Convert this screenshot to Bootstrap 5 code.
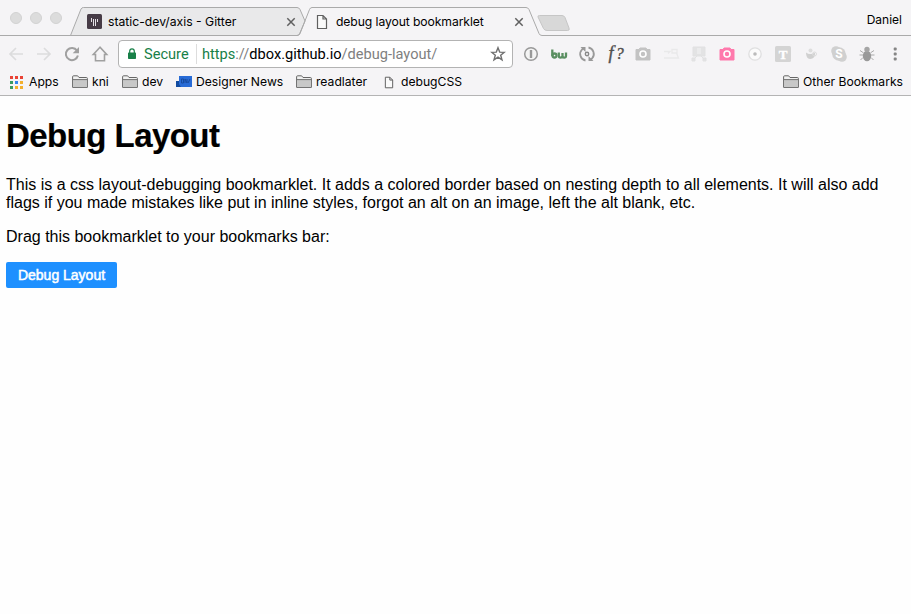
<!DOCTYPE html>
<html lang="en">
<head>
<meta charset="utf-8">
<title>debug layout bookmarklet</title>
<link href="https://cdn.jsdelivr.net/npm/bootstrap@5.3.0/dist/css/bootstrap.min.css" rel="stylesheet">
<style>
body{background:#fefefe;color:#000;height:614px;overflow:hidden;font-family:"Liberation Sans",Arial,sans-serif}
.chrome-ui{background:#f5f4f6;height:96px;border-bottom:1px solid #b4b4b4;font:13px/16px Inter,Roboto,sans-serif;white-space:nowrap}
.tabstrip{height:36px}
.tab-shapes{z-index:0}
.strip-item{z-index:1}
.lights{width:87px;padding:0 0 0 10px;gap:8px}
.light{width:12px;height:12px;border-radius:50%;background:#dcdcdc;border:1px solid #d2d2d2}
.tab-one{width:229px;padding-top:7px}
.tab-two{width:260px;padding-top:7px}
.tab-label{font:12.2px/16px Inter,Roboto,sans-serif}
.t1{width:180px;padding-left:6px}
.t2{width:178px;padding-left:8px;letter-spacing:-.1px}
.person{padding:3px 9px 0 0;font-size:12px}
.toolbar{height:36px;padding-left:2px}
.tool{width:28px;height:28px;flex:none}
.omnibox{width:395px;height:28px;margin:0 4px;background:#fff;border:1px solid #b3b3b3;border-radius:4px;font:14.6px/20px Roboto,sans-serif}
.secure{color:#188048;width:45px;margin-left:7px}
.url-text{color:#808080;width:288px}
.vbar{width:1px;height:20px;background:#ddd;margin:0 5px 0 7px}
.bookmarks{height:20px;font-size:12.15px;padding-left:10px}
.bm{flex:none;gap:4px}
.bm:nth-child(1){width:62px;gap:6px}
.bm:nth-child(2){width:50px}
.bm:nth-child(3){width:54px}
.bm:nth-child(4){width:120px}
.bm:nth-child(5){width:85px}
.page-body{padding:21px 6px 0;font-size:16px;line-height:18px}
.page-title{font-size:33px;letter-spacing:-.55px;line-height:38px;font-weight:700;margin-bottom:21px;-webkit-text-stroke:.2px #000}
.page-text{margin-bottom:16px}
.mark-btn{background:#1e90ff;color:#fff;border:0;border-radius:2px;width:111px;height:26px;font-size:14px;line-height:26px;-webkit-text-stroke:.5px #fff}
</style>
<script src="https://cdn.jsdelivr.net/npm/bootstrap@5.3.0/dist/js/bootstrap.bundle.min.js"></script>
</head>
<body>
<svg width="0" height="0" class="position-absolute">
<symbol id="folder" viewBox="0 0 16 14"><path d="M.6 12.4V1.8Q.6.8 1.6.8H5.6L7 2.5H14.4Q15.4 2.5 15.4 3.5V12.4Z" fill="#f0f0f0" stroke="#666"/><path d="M1 5H15V12H1Z" fill="#c8c8c8"/><path d="M1 4.6H15" stroke="#707070"/></symbol>
<symbol id="sheet" viewBox="0 0 12 16"><path d="M1.5 1.5H7L10.5 5V14.5H1.5ZM7 1.5V5H10.5" fill="#fafafa" stroke="#606060" stroke-width="1.2"/></symbol>
<symbol id="close" viewBox="0 0 10 10"><path d="M1.3 1.3L8.7 8.7M8.7 1.3L1.3 8.7" stroke="#606060" stroke-width="1.5"/></symbol>
<symbol id="camera" viewBox="0 0 28 28"><path d="M7 9.5H10L11 8H17L18 9.5H21V20H7Z" fill="currentColor" stroke="currentColor" stroke-linejoin="round"/><circle cx="14" cy="14" r="3" fill="none" stroke="#fff" stroke-width="1.6"/></symbol>
</svg>
<header class="chrome-ui">
<div class="tabstrip position-relative d-flex">
<svg class="tab-shapes position-absolute top-0 start-0" width="911" height="36"><path d="M70.5 35.5L81 9Q81.800 7.500 83.500 7.500H297Q299 7.500 300 9.500L305 21L299.500 34Q299 35.500 297 35.500Z" fill="#e9e9ea" stroke="#aaa"/><path d="M0 35.500H297Q299 35.500 300 33.500L309.500 9.500Q310.300 7.500 312 7.500H526Q528 7.500 529 9.500L539 33.500Q539.800 35.500 542 35.500H911" fill="none" stroke="#aaa"/><path d="M539.500 15.500H562Q564 15.500 565 17.500L569 28Q570 30.500 567.500 30.500H547Q544.500 30.500 543.500 28.500L538 17Q537.500 15.500 539.500 15.500Z" fill="#d8d8d8" stroke="#c6c6c6"/></svg>
<div class="lights strip-item d-flex align-items-center"><span class="light"></span><span class="light"></span><span class="light"></span></div>
<div class="tab-one strip-item d-flex align-items-center">
<svg width="15" height="15" viewBox="0 0 15 15"><rect width="15" height="15" rx="1.500" fill="#463b45"/><path d="M4.500 4V8M6.500 5V12M8.500 5V12M10.500 5V8" stroke="#e6e2e6"/></svg>
<span class="tab-label t1">static-dev/axis - Gitter</span>
<svg class="ms-1" width="10" height="10"><use href="#close"/></svg>
</div>
<div class="tab-two strip-item d-flex align-items-center">
<svg width="12" height="16"><use href="#sheet"/></svg>
<span class="tab-label t2">debug layout bookmarklet</span>
<svg class="ms-2" width="10" height="10"><use href="#close"/></svg>
</div>
<div class="person strip-item ms-auto d-flex align-items-center">Daniel</div>
</div>
<div class="toolbar d-flex align-items-center">
<svg class="tool" viewBox="0 0 28 28"><path d="M21 14H8M14 8L8 14L14 20" fill="none" stroke="#dcdcdd" stroke-width="1.700"/></svg>
<svg class="tool" viewBox="0 0 28 28"><path d="M7 14H20M14 8L20 14L14 20" fill="none" stroke="#dcdcdd" stroke-width="1.700"/></svg>
<svg class="tool" viewBox="0 0 28 28"><path d="M19 10.600A6.100 6.100 0 1 0 19.900 15.500" fill="none" stroke="#a0a0a0" stroke-width="2"/><path d="M21 7V13.300H14.700Z" fill="#a0a0a0"/></svg>
<svg class="tool" viewBox="0 0 28 28"><path d="M14 7.200L7.300 14.500H9.500V20.800H18.500V14.500H20.700Z" fill="none" stroke="#a0a0a0" stroke-width="1.600"/></svg>
<div class="omnibox d-flex align-items-center">
<svg class="ms-2" width="10" height="14" viewBox="0 0 10 14"><rect x="1" y="5.500" width="8" height="6.500" rx=".7" fill="#188048"/><path d="M2.700 6V4.200A2.300 2.300 0 0 1 7.300 4.200V6" fill="none" stroke="#188048" stroke-width="1.200"/></svg>
<span class="secure">Secure</span><span class="vbar"></span>
<span class="url-text"><span class="secure m-0">https</span>://<span class="text-black">dbox.github.io</span>/debug-layout/</span>
<svg width="16" height="16" viewBox="0 0 16 16"><path d="M8 1.700L9.700 6.100L14.300 6.300L10.700 9.200L12 13.800L8 11.200L4 13.800L5.300 9.200L1.700 6.300L6.300 6.100Z" fill="none" stroke="#707070" stroke-width="1.400"/></svg>
</div>
<svg class="tool" viewBox="0 0 28 28"><circle cx="14" cy="14" r="6.300" fill="#f4f4f4" stroke="#999" stroke-width="1.500"/><path d="M14 10V18" stroke="#999" stroke-width="2.400"/></svg>
<svg class="tool" viewBox="0 0 28 28"><g fill="none" stroke="#5a8f61" stroke-width="2.300"><path d="M7.300 9.500V16"/><circle cx="9.500" cy="15.500" r="2"/><path d="M13.800 12.500V16Q13.800 17.600 15.500 17.600T17.500 16V13V16Q17.500 17.600 19.200 17.600T21 16V12.500"/></g></svg>
<svg class="tool" viewBox="0 0 28 28"><g fill="none" stroke="#999" stroke-width="1.800"><path d="M12.500 20.500A6.600 6.600 0 0 1 9 9.500L11 8"/><path d="M15.500 7.500A6.600 6.600 0 0 1 19 18.500L17 20"/></g><path d="M7.500 7H12.500V12ZM20.500 21H15.500V16Z" fill="#999"/><circle cx="14" cy="14" r="1.700" fill="none" stroke="#888" stroke-width="1.400"/></svg>
<svg class="tool" viewBox="0 0 28 28"><text x="7.500" y="18.500" font-family="Liberation Serif, serif" font-size="18" font-style="italic" fill="#505050" stroke="#505050" stroke-width=".4">f</text><text x="14.800" y="18.500" font-family="Liberation Serif, serif" font-size="16" font-style="italic" fill="#505050" stroke="#505050" stroke-width=".4">?</text></svg>
<svg class="tool" color="#c3c3c3"><use href="#camera"/></svg>
<svg class="tool" viewBox="0 0 28 28"><path d="M7 11.500H13L11 13.500M15 9.500H20V13H15ZM7 18H21.500L19.500 13" fill="none" stroke="#e9e9ea" stroke-width="1.300"/></svg>
<svg class="tool" viewBox="0 0 28 28"><path d="M8 7H20V16H8ZM7 18H10V21H7ZM18 18H21V21H18ZM12 16L9 19M16 16L19 19" fill="#e3e3e4" stroke="#e1e1e2"/><path d="M12 8H16V14H12Z" fill="#ebebec"/></svg>
<svg class="tool" color="#ff79ac"><use href="#camera"/></svg>
<svg class="tool" viewBox="0 0 28 28"><circle cx="14" cy="14" r="6.200" fill="#fbfbfb" stroke="#dfdfe0" stroke-width="1.300"/><circle cx="14" cy="14" r="1.800" fill="#bbb"/></svg>
<svg class="tool" viewBox="0 0 28 28"><rect x="6" y="6" width="16" height="16" rx="1.500" fill="#d4d4d4"/><text x="14" y="18.500" text-anchor="middle" font-family="Liberation Serif, serif" font-weight="700" font-size="13" fill="#fff" stroke="#fff" stroke-width=".4">T</text></svg>
<svg class="tool" viewBox="0 0 28 28"><path d="M9 12.500Q13 15.500 18 12.500Q18.500 18.500 13 19Q9 18.500 9 12.500Z" fill="#d0d0d0"/><circle cx="13.500" cy="10.500" r="2" fill="#dedede"/><circle cx="17.500" cy="14" r="2" fill="none" stroke="#ddd"/></svg>
<svg class="tool" viewBox="0 0 28 28"><circle cx="11" cy="11" r="4.800" fill="#d0d0d0"/><circle cx="17" cy="17" r="4.800" fill="#d0d0d0"/><circle cx="14" cy="14" r="6.800" fill="#d0d0d0"/><text x="14" y="18.300" text-anchor="middle" font-family="Roboto, sans-serif" font-weight="700" font-size="12" fill="#fff">S</text></svg>
<svg class="tool" viewBox="0 0 28 28"><path d="M7 10.500L10 12.500M21 10.500L18 12.500M6.500 15H21.500M7.500 20L10 17.500M20.500 20L18 17.500" stroke="#aaa"/><ellipse cx="14" cy="16" rx="4.200" ry="5.200" fill="#999"/><circle cx="14" cy="9.500" r="2.700" fill="#a5a5a5"/></svg>
<svg class="tool" viewBox="0 0 28 28" fill="#858585"><rect x="12.700" y="7.500" width="3" height="3" rx="1"/><rect x="12.700" y="12.500" width="3" height="3" rx="1"/><rect x="12.700" y="17.500" width="3" height="3" rx="1"/></svg>
</div>
<nav class="bookmarks d-flex align-items-center">
<div class="bm d-flex align-items-center"><svg width="13" height="13" viewBox="0 0 13 13"><path d="M0 1.500H13" stroke="#e94235" stroke-width="3" stroke-dasharray="3 2"/><path d="M0 5H3V8H0ZM0 10H3V13H0Z" fill="#3a9b62"/><path d="M5 5H8V8H5Z" fill="#3185ee"/><path d="M10 5H13V8H10ZM5 10H8V13H5ZM10 10H13V13H10Z" fill="#f3b02d"/></svg><span>Apps</span></div>
<div class="bm d-flex align-items-center"><svg width="16" height="14"><use href="#folder"/></svg><span>kni</span></div>
<div class="bm d-flex align-items-center"><svg width="16" height="14"><use href="#folder"/></svg><span>dev</span></div>
<div class="bm d-flex align-items-center"><svg width="16" height="12" viewBox="0 0 16 12"><path d="M3 0H16V11H0V5H3Z" fill="#286bd6"/><path d="M0 5H3V8L5 11H0Z" fill="#124ba0"/><path d="M5.500 3V7H7.500V3ZM9 7V3L11 7V3M12 7L14 3" fill="none" stroke="#174b9e"/></svg><span>Designer News</span></div>
<div class="bm d-flex align-items-center"><svg width="16" height="14"><use href="#folder"/></svg><span>readlater</span></div>
<div class="bm d-flex align-items-center"><svg width="16" height="13"><use href="#sheet"/></svg><span>debugCSS</span></div>
<div class="bm d-flex align-items-center ms-auto pe-2"><svg width="16" height="14"><use href="#folder"/></svg><span>Other Bookmarks</span></div>
</nav>
</header>
<main class="page-body">
<h1 class="page-title">Debug Layout</h1>
<p class="page-text">This is a css layout-debugging bookmarklet. It adds a colored border based on nesting depth to all elements. It will also add<br>flags if you made mistakes like put in inline styles, forgot an alt on an image, left the alt blank, etc.</p>
<p class="page-text">Drag this bookmarklet to your bookmarks bar:</p>
<a href="#" class="btn mark-btn p-0">Debug Layout</a>
</main>
</body>
</html>
